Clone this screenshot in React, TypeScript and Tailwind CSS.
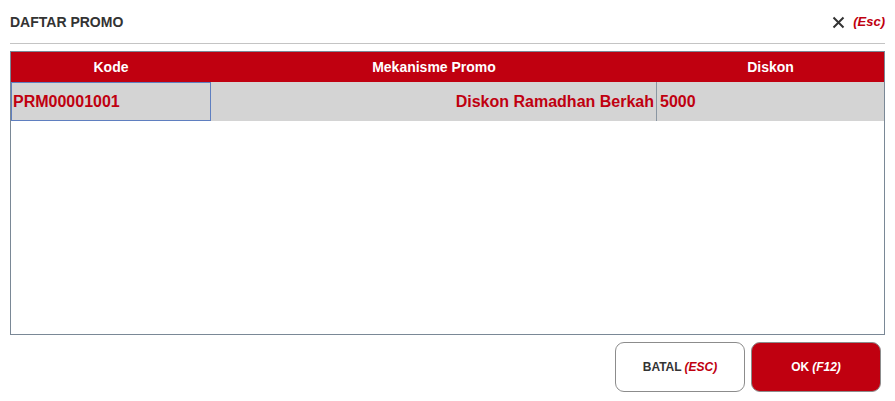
import React from "react";

export default function App() {
  return (
    <div
      className="w-[895px] h-[401px] bg-white relative overflow-hidden"
      style={{ fontFamily: '"Liberation Sans", Arial, sans-serif' }}
    >
      <div className="flex items-center justify-between pl-[10px] pr-[10px] pt-[13px] h-[30px]">
        <div className="text-[14px] font-bold text-[#333333] leading-none">DAFTAR PROMO</div>
        <div className="flex items-center gap-[8px]">
          <svg width="13" height="13" viewBox="0 0 13 13" className="mt-[1px]">
            <path d="M1.5 1.5 L11.5 11.5 M11.5 1.5 L1.5 11.5" stroke="#333" strokeWidth="2" />
          </svg>
          <span className="text-[13px] font-bold italic text-[#c0000f] leading-none">(Esc)</span>
        </div>
      </div>
      <div className="ml-[10px] mr-[10px] mt-[13px] h-[1px] bg-[#c4c4c4]" />
      <div className="ml-[10px] mt-[7px] w-[875px] h-[284px] border border-[#7a8896] flex flex-col">
        <div className="flex h-[30px] bg-[#c00010] text-white text-[14px] font-bold shrink-0">
          <div className="w-[200px] flex items-center justify-center">Kode</div>
          <div className="w-[446px] flex items-center justify-center">Mekanisme Promo</div>
          <div className="flex-1 flex items-center justify-center">Diskon</div>
        </div>
        <div className="flex h-[39px] bg-[#d4d4d4] text-[16px] font-bold text-[#c00010] shrink-0">
          <div className="w-[200px] border border-[#5f7fc0] flex items-center pl-[1px]">PRM00001001</div>
          <div className="w-[446px] border-r border-[#8a96a2] flex items-center justify-end pr-[2px]">
            Diskon Ramadhan Berkah
          </div>
          <div className="flex-1 flex items-center pl-[3px]">5000</div>
        </div>
      </div>
      <div className="flex justify-end gap-[6px] pr-[14px] mt-[7px]">
        <button className="w-[130px] h-[50px] rounded-[9px] border border-[#8c8c8c] bg-white text-[12px] font-bold text-[#333333] flex items-center justify-center gap-[3px]">
          BATAL <span className="italic text-[#c0000f]">(ESC)</span>
        </button>
        <button className="w-[130px] h-[50px] rounded-[9px] border border-[#8c8c8c] bg-[#c00010] text-[12px] font-bold text-white flex items-center justify-center gap-[3px]">
          OK <span className="italic">(F12)</span>
        </button>
      </div>
    </div>
  );
}
